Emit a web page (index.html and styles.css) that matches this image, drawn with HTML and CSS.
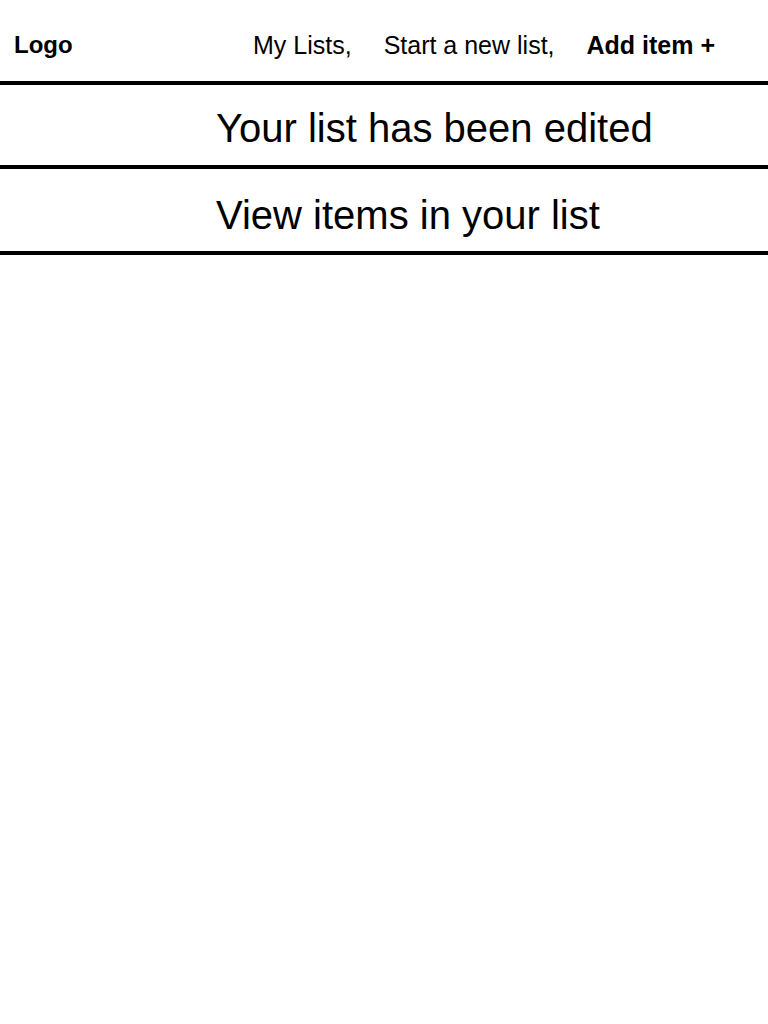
FILE: index.html
```html
<!DOCTYPE html>
<html lang="en">
<head>
<meta charset="utf-8">
<title>List edited</title>
<link rel="stylesheet" href="styles.css">
</head>
<body>
<header class="topbar">
  <div class="logo">Logo</div>
  <nav class="nav">
    <a class="nav-link" href="#">My Lists,</a>
    <a class="nav-link" href="#">Start a new list,</a>
    <a class="nav-link nav-add" href="#">Add item +</a>
  </nav>
</header>
<section class="row row-first">
  <h1 class="row-text">Your list has been edited</h1>
</section>
<section class="row row-second">
  <a class="row-text" href="#">View items in your list</a>
</section>
</body>
</html>
```

FILE: styles.css
```css
html, body {
  margin: 0;
  padding: 0;
  background: #ffffff;
  color: #000000;
  font-family: "Liberation Sans", Arial, Helvetica, sans-serif;
}

.topbar {
  display: flex;
  align-items: flex-start;
  height: 85px;
  box-sizing: border-box;
  padding: 31px 0 0 14px;
  border-bottom: 4px solid #000;
}

.logo {
  font-size: 24px;
  line-height: 28px;
  font-weight: bold;
  width: 239px;
}

.nav {
  display: flex;
  gap: 32px;
}

.nav-link {
  font-size: 25px;
  line-height: 28px;
  color: #000;
  text-decoration: none;
}

.nav-add {
  font-weight: bold;
}

.row {
  box-sizing: border-box;
  padding-left: 216px;
  border-bottom: 4px solid #000;
}

.row-first {
  height: 84px;
  padding-top: 20px;
}

.row-second {
  height: 86px;
  padding-top: 23px;
}

.row-text {
  display: block;
  margin: 0;
  font-size: 40px;
  line-height: 46px;
  font-weight: normal;
  color: #000;
  text-decoration: none;
}
```
